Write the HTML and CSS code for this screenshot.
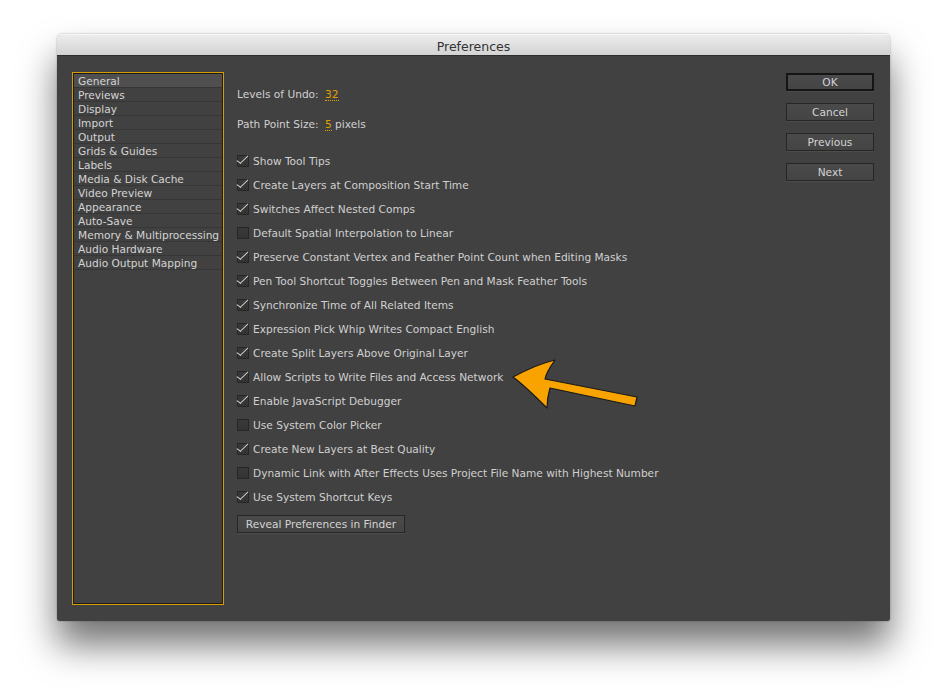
FILE: index.html
```html
<!DOCTYPE html>
<html>
<head>
<meta charset="utf-8">
<link rel="stylesheet" href="styles.css">
</head>
<body>
<div class="stage">
  <div class="window">
    <div class="titlebar">Preferences</div>
    <div class="body">
      <ul class="sidebar">
        <li class="sel">General</li>
        <li>Previews</li>
        <li>Display</li>
        <li>Import</li>
        <li>Output</li>
        <li>Grids &amp; Guides</li>
        <li>Labels</li>
        <li>Media &amp; Disk Cache</li>
        <li>Video Preview</li>
        <li>Appearance</li>
        <li>Auto-Save</li>
        <li>Memory &amp; Multiprocessing</li>
        <li>Audio Hardware</li>
        <li>Audio Output Mapping</li>
      </ul>
      <div class="content">
        <div class="field first">Levels of Undo: <span class="num">32</span></div>
        <div class="field">Path Point Size: <span class="num">5</span> pixels</div>
        <div class="checks">
          <div class="check on"><span class="box"></span>Show Tool Tips</div>
          <div class="check on"><span class="box"></span>Create Layers at Composition Start Time</div>
          <div class="check on"><span class="box"></span>Switches Affect Nested Comps</div>
          <div class="check"><span class="box"></span>Default Spatial Interpolation to Linear</div>
          <div class="check on"><span class="box"></span>Preserve Constant Vertex and Feather Point Count when Editing Masks</div>
          <div class="check on"><span class="box"></span>Pen Tool Shortcut Toggles Between Pen and Mask Feather Tools</div>
          <div class="check on"><span class="box"></span>Synchronize Time of All Related Items</div>
          <div class="check on"><span class="box"></span>Expression Pick Whip Writes Compact English</div>
          <div class="check on"><span class="box"></span>Create Split Layers Above Original Layer</div>
          <div class="check on"><span class="box"></span>Allow Scripts to Write Files and Access Network</div>
          <div class="check on"><span class="box"></span>Enable JavaScript Debugger</div>
          <div class="check"><span class="box"></span>Use System Color Picker</div>
          <div class="check on"><span class="box"></span>Create New Layers at Best Quality</div>
          <div class="check"><span class="box"></span>Dynamic Link with After Effects Uses Project File Name with Highest Number</div>
          <div class="check on"><span class="box"></span>Use System Shortcut Keys</div>
        </div>
        <div class="reveal-row"><button class="btn reveal">Reveal Preferences in Finder</button></div>
        <svg class="arrow" width="140" height="60" viewBox="0 0 140 60">
          <path d="M3 22 C18 14 32 8 45 5 C40 12 36 18 35 24 L127 42 L125 51 L40 33 C38 40 37 46 37 53 C26 42 15 31 3 22 Z" fill="#f9a300" stroke="#1a1a1a" stroke-width="1.2" stroke-linejoin="round"/>
        </svg>
      </div>
      <div class="buttons">
        <button class="btn ok">OK</button>
        <button class="btn">Cancel</button>
        <button class="btn">Previous</button>
        <button class="btn">Next</button>
      </div>
    </div>
  </div>
</div>
</body>
</html>
```
FILE: styles.css
```css
html, body {
  margin: 0;
  padding: 0;
  background: #ffffff;
}
body {
  font-family: "DejaVu Sans", "Liberation Sans", sans-serif;
  font-size: 10.6px;
  color: #d0d0d0;
}
.stage {
  padding: 34px 0 0 57px;
  width: 947px;
  height: 700px;
  box-sizing: border-box;
}
.window {
  width: 833px;
  height: 587px;
  display: flex;
  flex-direction: column;
  border-radius: 5px 5px 2px 2px;
  overflow: hidden;
  box-shadow: 0 24px 36px rgba(0,0,0,0.55), 0 0 2px rgba(0,0,0,0.35);
}
.titlebar {
  height: 22px;
  flex: none;
  background: linear-gradient(#ececec, #d3d3d3);
  border-top: 1px solid #f7f7f7;
  border-bottom: 1px solid #2e2e2e;
  box-sizing: border-box;
  text-align: center;
  line-height: 23px;
  font-family: "DejaVu Sans", sans-serif;
  font-size: 12.5px;
  color: #333;
}
.body {
  flex: 1;
  background: #414141;
  display: flex;
  padding: 16px 16px 16px 15px;
}
.sidebar {
  list-style: none;
  margin: 0;
  padding: 1px;
  width: 152px;
  height: 533px;
  box-sizing: border-box;
  border: 1px solid #d69c00;
  box-shadow: inset 0 0 0 1px #1c1c1c;
  background: #414141;
  flex: none;
}
.sidebar li {
  height: 14px;
  line-height: 15px;
  padding-left: 4px;
  border-bottom: 1px solid #363636;
  box-sizing: border-box;
  color: #d4d4d4;
  white-space: nowrap;
  font-size: 10.6px;
}
.sidebar li.sel {
  background: #4f4f4f;
}
.content {
  position: relative;
  flex: 1;
  padding-left: 13px;
}
.field {
  height: 14px;
  line-height: 14px;
  margin-top: 16px;
  white-space: nowrap;
}
.field.first {
  margin-top: 15px;
}
.num {
  color: #e0a000;
  margin-left: 3px;
  border-bottom: 1px dotted #e0a000;
}
.checks {
  margin-top: 23px;
  display: flex;
  flex-direction: column;
  gap: 10px;
}
.check {
  height: 14px;
  line-height: 14px;
  display: flex;
  align-items: center;
  white-space: nowrap;
}
.box {
  position: relative;
  width: 10px;
  height: 10px;
  border: 1px solid #262626;
  background: linear-gradient(#3a3a3a, #333);
  margin-right: 4px;
  flex: none;
}
.check.on .box::after {
  content: "";
  position: absolute;
  left: 2px;
  top: -3px;
  width: 4px;
  height: 10px;
  border-right: 1.6px solid #d8d8d8;
  border-bottom: 1.6px solid #d8d8d8;
  transform: rotate(36deg) skewX(-10deg);
}
.reveal-row {
  margin-top: 11px;
}
.btn {
  font-family: "DejaVu Sans", "Liberation Sans", sans-serif;
  font-size: 10.6px;
  color: #d4d4d4;
  background: linear-gradient(#4a4a4a, #444);
  border: 1px solid #262626;
  box-shadow: 0 1px 0 #4c4c4c;
  height: 18px;
  padding: 0;
  line-height: 16px;
  text-align: center;
}
.reveal {
  width: 168px;
}
.buttons {
  width: 88px;
  flex: none;
  display: flex;
  flex-direction: column;
  gap: 12px;
  padding-top: 1px;
}
.buttons .btn {
  width: 88px;
}
.btn.ok {
  border: 2px solid #151515;
  line-height: 14px;
}
.arrow {
  position: absolute;
  left: 286px;
  top: 283px;
}
```
